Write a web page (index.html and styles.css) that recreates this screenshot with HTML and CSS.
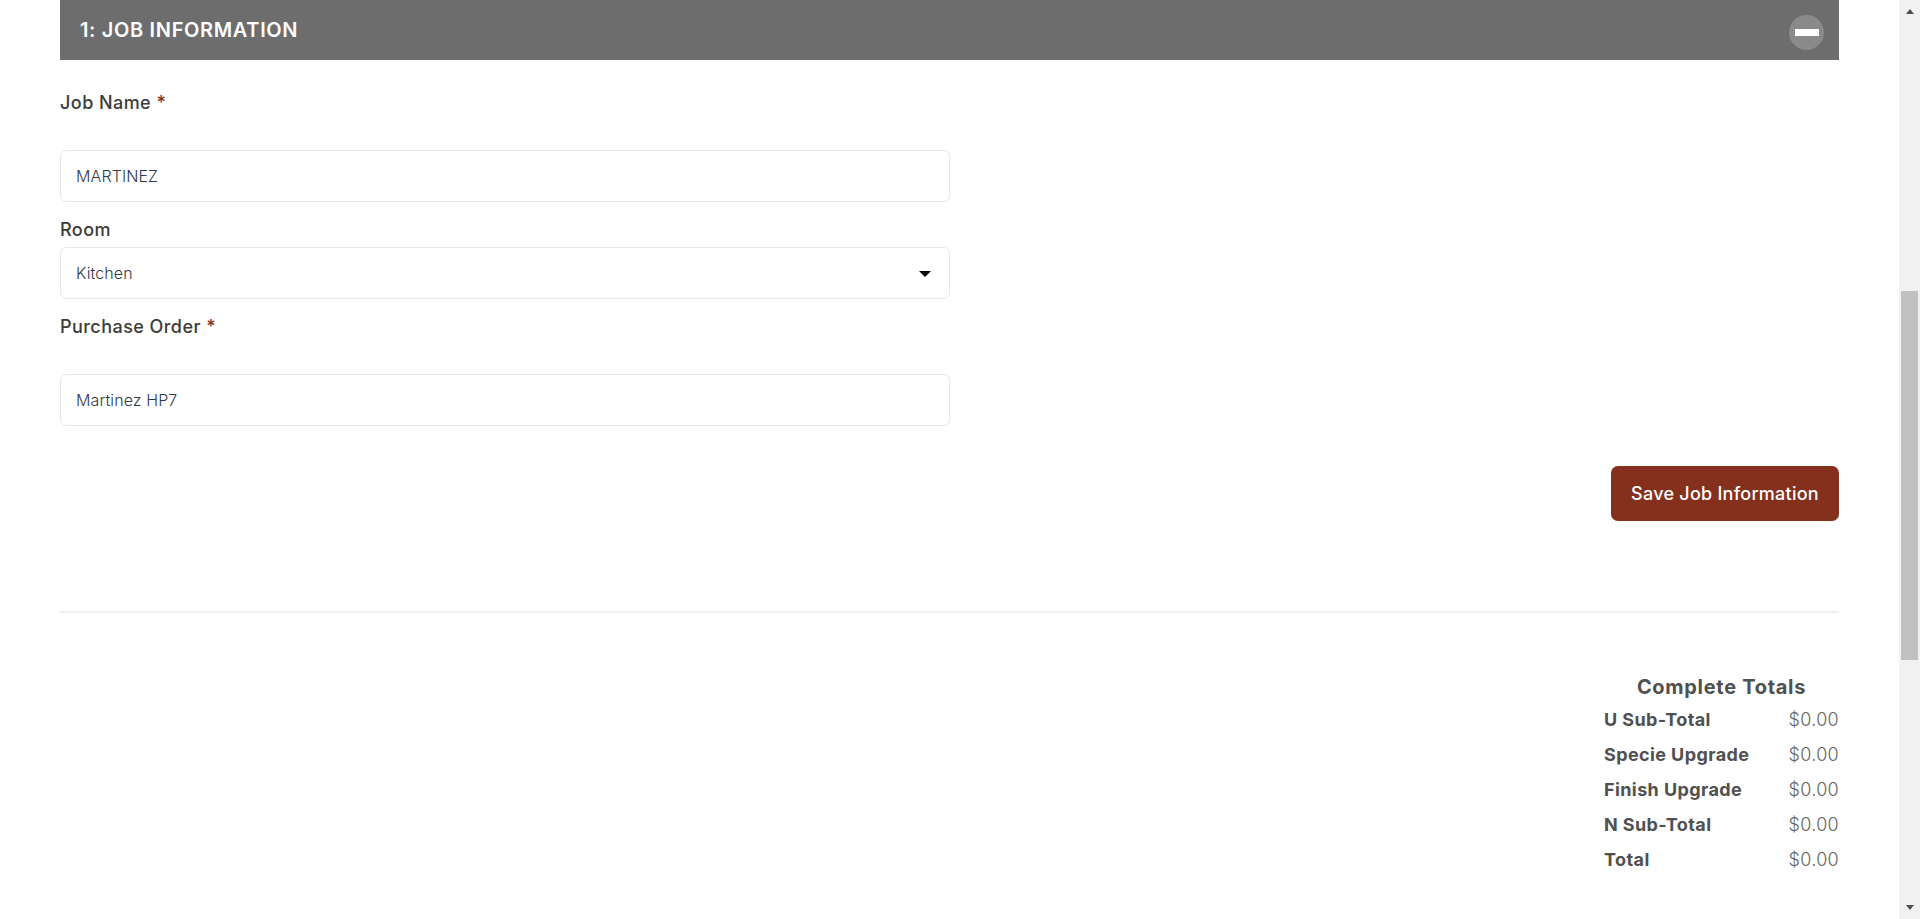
FILE: index.html
```html
<!DOCTYPE html>
<html>
<head>
    <title>Job Information</title>
    <link rel="stylesheet" href="styles.css">
</head>
<body>
    <div class="page">
        <div class="content">
            <div class="section-header">
                <h2>1: Job Information</h2>
                <button class="collapse-btn" aria-label="Collapse"><span class="minus"></span></button>
            </div>

            <div class="form-group">
                <label class="label-tall" for="jobName">Job Name <span class="required">*</span></label>
                <input type="text" id="jobName" value="MARTINEZ">
            </div>
            <div class="form-group">
                <label for="room">Room</label>
                <div class="select-wrap">
                    <select id="room">
                        <option>Kitchen</option>
                    </select>
                </div>
            </div>
            <div class="form-group">
                <label class="label-tall" for="purchaseOrder">Purchase Order <span class="required">*</span></label>
                <input type="text" id="purchaseOrder" value="Martinez HP7">
            </div>

            <div class="actions">
                <button class="save-btn">Save Job Information</button>
            </div>

            <hr class="divider">

            <div class="totals-row">
                <div class="totals">
                    <h3>Complete Totals</h3>
                    <div class="total-line"><strong>U Sub-Total</strong><span>$0.00</span></div>
                    <div class="total-line"><strong>Specie Upgrade</strong><span>$0.00</span></div>
                    <div class="total-line"><strong>Finish Upgrade</strong><span>$0.00</span></div>
                    <div class="total-line"><strong>N Sub-Total</strong><span>$0.00</span></div>
                    <div class="total-line"><strong>Total</strong><span>$0.00</span></div>
                </div>
            </div>
        </div>

        <div class="scrollbar">
            <span class="arrow-up"></span>
            <div class="track"><div class="thumb"></div></div>
            <span class="arrow-down"></span>
        </div>
    </div>
</body>
</html>
```

FILE: styles.css
```css
* {
    box-sizing: border-box;
}
html, body {
    margin: 0;
    height: 100%;
    overflow: hidden;
}
body {
    font-family: Inter, "Open Sans", sans-serif;
    background-color: #fff;
    color: #3b3b3b;
}
.page {
    display: flex;
    height: 919px;
}
.content {
    flex: 1;
    padding: 0 60px;
}
.section-header {
    display: flex;
    align-items: center;
    justify-content: space-between;
    height: 60px;
    padding: 0 15px 0 20px;
    background-color: #6d6d6d;
}
.section-header h2 {
    margin: 0;
    color: #fff;
    font-size: 20px;
    font-weight: 600;
    letter-spacing: 0.65px;
    line-height: 60px;
    text-transform: uppercase;
}
.collapse-btn {
    display: flex;
    align-items: center;
    justify-content: center;
    width: 35px;
    height: 35px;
    margin-top: 5px;
    padding: 0;
    border: none;
    border-radius: 50%;
    background-color: #8a8a8a;
}
.minus {
    display: block;
    width: 24px;
    height: 7px;
    background-color: #fff;
}
.form-group {
    width: 890px;
    padding-top: 16px;
}
.section-header + .form-group {
    padding-top: 31px;
}
label {
    display: block;
    margin-bottom: 5px;
    font-size: 18px;
    font-weight: 500;
    line-height: 24px;
    letter-spacing: 0.45px;
}
.label-tall {
    margin-bottom: 35px;
}
.required {
    color: #85301c;
}
input[type="text"], select {
    display: block;
    width: 100%;
    height: 52px;
    padding: 0 15px;
    border: 1px solid #e8e8e8;
    border-radius: 6px;
    background-color: #fff;
    color: #2f3a48;
    font-family: inherit;
    font-size: 16px;
    font-weight: 300;
    letter-spacing: 0.1px;
}
select {
    appearance: none;
}
.select-wrap {
    position: relative;
}
.select-wrap::after {
    content: "";
    position: absolute;
    top: 24px;
    right: 19px;
    border-top: 6px solid #000;
    border-left: 6.5px solid transparent;
    border-right: 6.5px solid transparent;
}
.actions {
    display: flex;
    justify-content: flex-end;
    margin-top: 40px;
}
.save-btn {
    width: 228px;
    height: 55px;
    padding: 0;
    border: none;
    border-radius: 7px;
    background-color: #85301c;
    color: #fff;
    font-family: inherit;
    font-size: 18px;
    font-weight: 500;
    letter-spacing: 0.25px;
}
.divider {
    height: 2px;
    margin: 90px 0 0;
    border: none;
    background-color: #f0f0f0;
}
.totals-row {
    display: flex;
    justify-content: flex-end;
    margin-top: 62px;
}
.totals {
    width: 235px;
    color: #505050;
}
.totals h3 {
    margin: 0 0 3px;
    font-size: 20px;
    font-weight: 700;
    line-height: 24px;
    text-align: center;
    letter-spacing: 0.7px;
}
.total-line {
    display: flex;
    justify-content: space-between;
    height: 35px;
    align-items: center;
    font-size: 18px;
    letter-spacing: 0.4px;
}
.total-line strong {
    font-weight: 700;
}
.total-line span {
    color: #666;
    font-weight: 300;
    letter-spacing: 0.3px;
}
.scrollbar {
    display: flex;
    flex-direction: column;
    align-items: center;
    width: 21px;
    background-color: #f1f1f1;
}
.arrow-up, .arrow-down {
    flex: none;
    width: 0;
    margin: 9px 0;
    border-left: 4.5px solid transparent;
    border-right: 4.5px solid transparent;
}
.arrow-up {
    border-bottom: 5px solid #505050;
}
.arrow-down {
    border-top: 5px solid #505050;
}
.track {
    flex: 1;
    width: 100%;
    padding: 268px 2px 0 2px;
}
.thumb {
    height: 369px;
    background-color: #c1c1c1;
}
```
